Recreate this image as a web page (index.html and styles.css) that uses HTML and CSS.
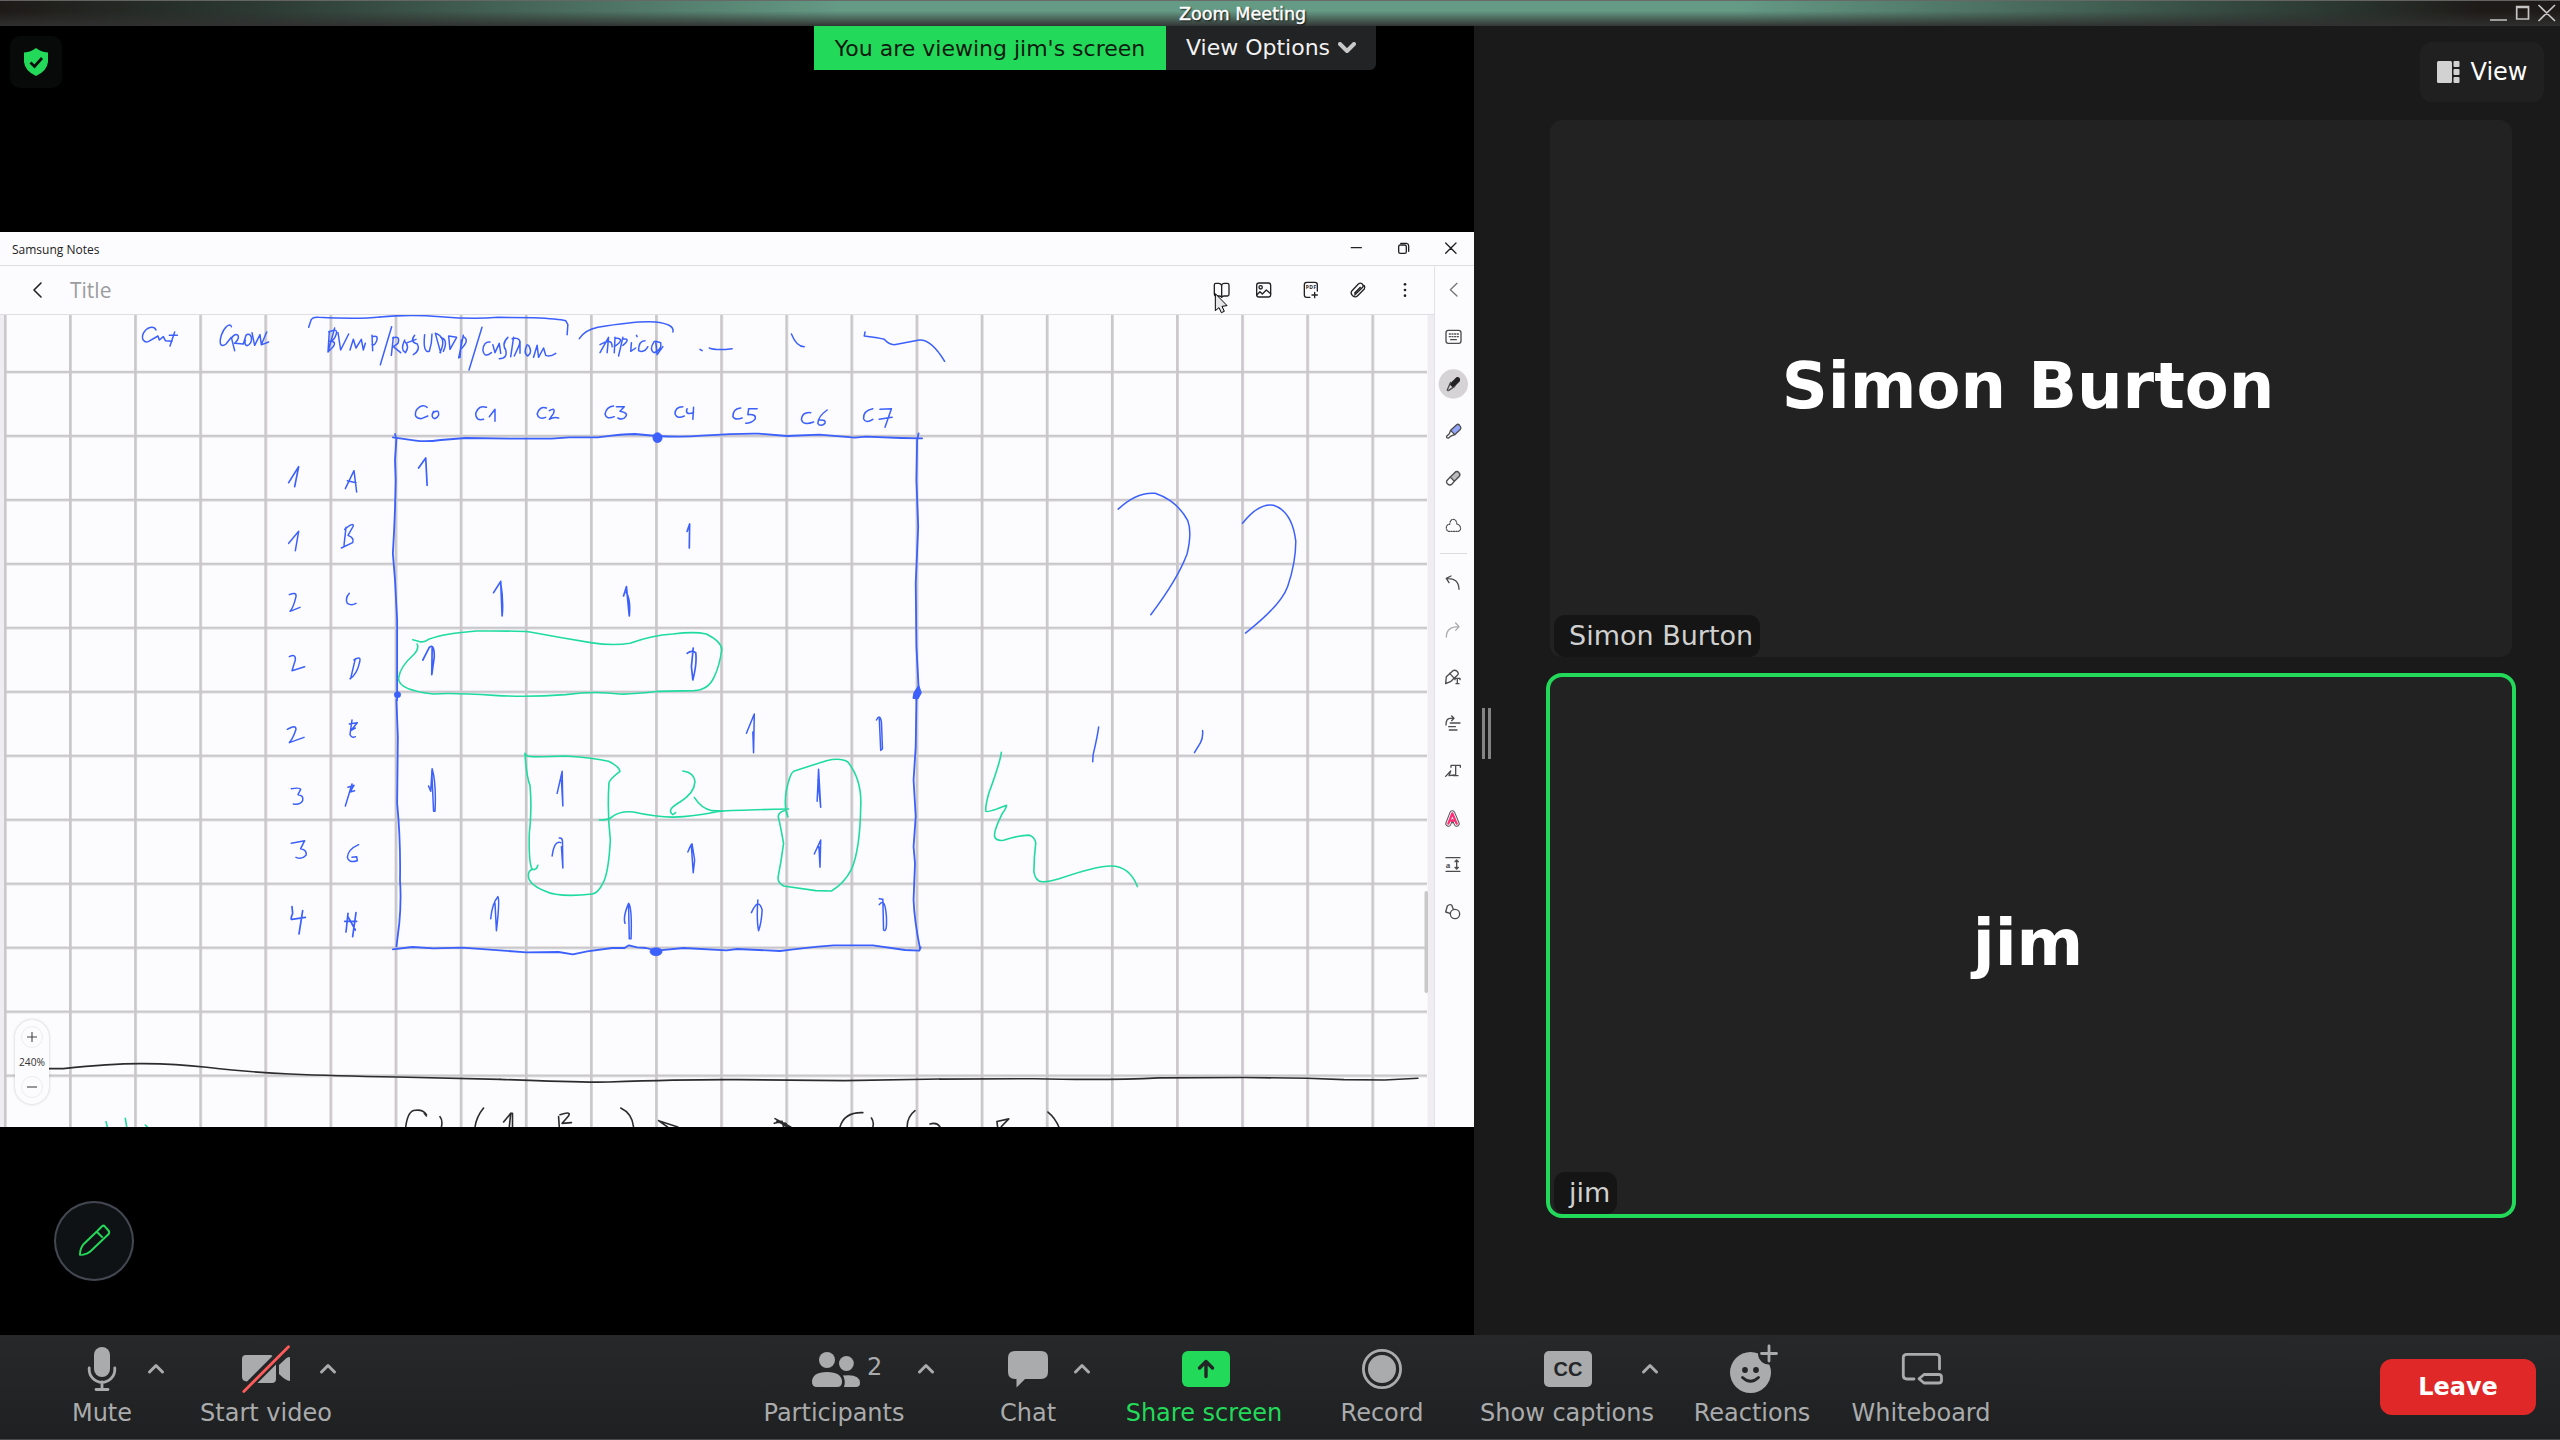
FILE: index.html
```html
<!DOCTYPE html>
<html lang="en">
<head>
<meta charset="utf-8">
<title>Zoom Meeting</title>
<link rel="stylesheet" href="styles.css">
</head>
<body>
<div class="window">
  <header class="titlebar">
    <span class="titlebar-text">Zoom Meeting</span>
    <svg class="titlebar-buttons" width="76" height="26" viewBox="2484 0 76 26">
      <path d="M2490 20H2507M2516.700 6.500H2528.500V19H2516.700ZM2516 7.500H2529M2538.500 5L2555 21M2555 5L2538.500 21"/>
    </svg>
  </header>

  <main class="stage">
    <section class="share-pane">
      <div class="share-top">
        <div class="shield">
          <svg width="26" height="30" viewBox="0 0 26 30"><path fill="#23d959" d="M13 1Q18 5 25 5.500V15Q24 24 13 29Q2 24 1 15V5.500Q8 5 13 1Z"/><path fill="none" stroke="#0a0f0c" stroke-width="2.800" d="M7.500 15.500L11.500 19.500L19 11"/></svg>
        </div>
        <div class="banner">
          <span class="banner-info">You are viewing jim's screen</span>
          <span class="banner-options">View Options
            <svg width="18" height="12" viewBox="0 0 18 12"><path d="M2 2L9 9L16 2"/></svg>
          </span>
        </div>
      </div>

      <div class="notes">
        <div class="notes-title">
          <span>Samsung Notes</span>
          <svg class="ico" width="120" height="33" viewBox="500 21 360 99">
            <path d="M513 68H543M796 54L827 85M827 54L796 85"/>
            <rect x="655" y="60" width="23" height="25" rx="5"/>
            <path d="M661 55H679Q685 56 685 62V79"/>
          </svg>
        </div>
        <div class="notes-body">
          <div class="notes-main">
            <div class="notes-toolbar">
              <svg class="ico back" width="20" height="24" viewBox="0 0 20 24"><path style="stroke-width:1.600" d="M14 5L7 12L14 19"/></svg>
              <span class="notes-heading">Title</span>
              <svg class="ico tools" width="224" height="48" viewBox="90 122 672 144">
                <path d="M125 180Q122 174 116 174H107Q103 174 103 179V207Q103 212 108 212H118Q123 212 125 216Q127 212 132 212H142Q147 212 147 207V179Q147 174 142 174H133Q126 174 125 180V214"/>
                <rect x="230" y="173" width="42" height="42" rx="7"/><circle cx="242" cy="186" r="5"/>
                <path d="M230 209L240 199L247 206L259 194L272 205"/>
                <path d="M373 178Q373 171 380 171H405Q412 171 412 178V197M373 178V209Q373 216 380 216H390M404 201V217M396 209H412"/>
                <text class="pdf" x="377" y="192" textLength="32">PDF</text>
                <path d="M524 209L548 186Q552 180 546 175Q541 171 535 176L516 196Q510 204 518 211Q526 218 533 211L553 191Q556 186 553 181M524 203L541 186"/>
                <g fill="#222" stroke="none"><circle cx="675" cy="177" r="4"/><circle cx="675" cy="194" r="4"/><circle cx="675" cy="211" r="4"/></g>
                <path class="cursor" d="M106 206V256L117 247L124 262L133 258L126 243L140 241Z"/>
              </svg>
            </div>
            <div class="page">
              <svg class="ink" width="1434" height="812" viewBox="0 315 1434 812">
                <defs>
                  <pattern id="cols" x="3.900" y="315" width="65.120" height="900" patternUnits="userSpaceOnUse"><rect width="2.700" height="900" fill="#c9c7ca"/></pattern>
                  <pattern id="rows" x="0" y="370.800" width="1500" height="63.970" patternUnits="userSpaceOnUse"><rect width="1500" height="2.500" fill="#c9c7ca"/></pattern>
                </defs>
                <rect x="4" y="315" width="1423" height="812" fill="url(#cols)"/>
                <rect x="4" y="315" width="1423" height="812" fill="url(#rows)"/>
                <rect x="0" y="315" width="4" height="812" fill="#efedf1"/>
                <rect x="1427.500" y="315" width="6.500" height="812" fill="#efedf1"/>
                <rect x="1424.500" y="891" width="3.500" height="102" rx="1.700" fill="#c8c8c8"/>

                <g class="blue" transform="matrix(.33333 0 0 .33333 0 300)">
                  <path d="M468 90C462 76 440 80 430 100C422 118 434 130 446 124L474 108L478 120L490 110L496 122L516 124M524 96L510 138M508 106L532 106"/>
                  <path d="M694 80C690 66 672 82 664 106C654 140 668 140 678 132L694 112L704 152M694 116C708 90 728 110 704 130L730 132L738 106C746 96 760 108 752 128C742 144 732 136 736 120M756 98L764 136L780 104L784 134L800 96M786 134L806 126"/>
                  <path d="M926 82L934 58Q940 50 956 52Q1080 58 1140 51"/>
                  <path d="M1004 84L984 156M986 96Q1016 82 1008 104Q1002 122 990 124Q1012 124 998 142L984 156L988 94M1014 98L1022 150L1046 102M1050 150L1060 118L1068 144L1084 118L1090 150L1096 130M1116 106L1118 152M1116 110Q1136 104 1130 122Q1124 138 1116 134M1175 80L1141 194"/>
                  <path d="M1180 112L1174 166M1178 114Q1202 106 1194 130L1180 140L1202 158M1214 120Q1200 150 1216 158Q1230 140 1214 124M1244 106Q1228 126 1252 132Q1262 150 1240 164M1222 128L1248 118M1274 104Q1268 160 1288 154Q1296 130 1296 102M1306 100Q1342 112 1320 158M1306 100L1322 158M1322 112Q1346 120 1330 154M1346 108L1350 148L1370 112ZM1390 106L1376 174M1390 110Q1410 120 1384 146M1384 120L1380 172M1446 82L1407 210"/>
                  <path class="thick" d="M866 548L896 500L884 560"/><path d="M1036 566L1062 512L1070 576M1042 542L1068 548"/>
                  <path d="M866 730L896 694L886 752M1038 682L1032 736M1034 688Q1060 666 1060 678L1044 706Q1064 714 1058 728L1024 744"/>
                  <path d="M868 884Q890 874 888 890Q880 924 870 934L900 922M1048 880Q1034 896 1042 910Q1054 918 1068 910"/>
                  <path d="M868 1070Q888 1060 886 1080L876 1112L914 1100M1066 1076L1052 1136M1062 1080Q1086 1064 1078 1090Q1070 1124 1050 1136"/>
                </g>

                <g class="blue" transform="matrix(.35714 0 0 .33333 380 300)">
                  <path d="M0 51Q80 42 170 50Q260 58 330 52L430 53Q500 56 520 62L526 74L524 104"/>
                  <path d="M308 126Q290 124 288 150Q292 176 312 158M316 134L322 158L334 130L338 160M358 112Q340 130 352 150Q358 176 334 176M374 112L366 170M370 116Q400 110 388 140L376 168M392 124V160M412 134Q400 160 414 168Q428 156 416 136M430 172L440 136L444 172L458 144L464 166Q476 172 492 160"/>
                  <path d="M558 116Q574 90 610 82Q720 62 770 66Q826 72 820 96"/>
                  <path d="M616 158L640 112L636 158M616 134Q650 112 650 140M658 112L656 158M658 114Q690 116 656 140M680 112L668 168M680 116Q704 116 680 136M704 128L702 154L716 144M718 106l2 4M742 122Q724 122 724 152Q740 160 750 140M768 124Q752 150 768 158Q790 150 786 128L772 124L776 164L792 140"/>
                  <path d="M896 148l6 4M922 144Q940 152 986 146M1152 102Q1166 140 1188 140M1358 96L1356 108Q1400 114 1412 118Q1424 134 1440 134L1510 120Q1544 118 1581 184"/>
                  <path d="M132 322Q118 310 102 330Q92 356 116 356L134 348M150 334Q140 352 154 356Q170 346 162 334Q150 332 146 344"/>
                  <path d="M298 322Q276 314 268 340Q268 364 290 358M306 350L322 328L322 364"/>
                  <path d="M466 324Q446 318 440 342Q444 360 464 352M474 332Q492 320 486 340L474 358Q486 350 500 354"/>
                  <path d="M654 318Q634 320 630 342Q634 360 656 350M662 320L684 320L672 334Q696 338 688 350Q680 362 666 354"/>
                  <path d="M848 320Q826 320 826 342Q832 358 852 348M860 326Q852 346 878 338M878 322L876 358"/>
                  <path d="M1010 324Q988 326 988 350Q994 362 1014 354M1032 326L1056 326M1032 328L1030 344Q1056 342 1050 358Q1040 370 1024 370"/>
                  <path d="M1206 338Q1182 336 1180 358Q1184 378 1214 366M1252 330Q1226 350 1226 370Q1232 382 1246 370Q1250 358 1230 360"/>
                  <path d="M1380 326Q1352 332 1354 356Q1360 372 1380 358M1400 328L1432 326L1414 382M1398 358L1434 352"/>
                  <path class="edge" d="M36 412L100 422Q130 426 170 420L240 414L380 416L480 416L530 412L610 412Q680 402 714 402L774 408Q850 412 900 407Q1000 400 1060 401L1140 408L1230 404L1330 413L1360 410L1460 414L1518 415"/>
                  <path class="edge" d="M42 402L46 416L42 480L44 540Q42 660 36 760L42 840L48 960L48 1200M1508 400L1504 420L1502 540L1507 680L1500 850L1502 1040L1508 1160L1502 1200"/>
                  <ellipse class="blot" cx="777" cy="413" rx="13" ry="15"/><ellipse class="blot" cx="49" cy="1184" rx="9" ry="9"/><path class="blot" d="M1508 1160L1514 1178L1506 1194L1494 1194L1496 1180Z"/>
                  <path class="thick" d="M108 504L128 474L132 556M860 694L867 672L866 744M318 878L338 844L342 948Q346 900 338 850M682 888L690 860L698 948Q702 900 690 878"/>
                  <path class="thick" d="M120 1080L138 1042Q152 1030 152 1070L145 1124L146 1044M860 1060Q872 1050 884 1058Q888 1090 876 1140L872 1100L877 1044"/>
                </g>
                <path class="green" transform="matrix(.35714 0 0 .33333 380 300)" d="M92 1019L112 1025Q124 1028 136 1018Q180 1000 270 993Q380 992 420 996Q500 1012 590 1028Q650 1038 700 1030Q760 1006 820 1002Q880 994 914 1002Q958 1026 957 1050Q950 1100 936 1130Q920 1170 880 1172L780 1174Q700 1184 670 1182Q600 1172 520 1184Q410 1192 320 1186Q200 1178 150 1182Q50 1170 52 1134Q56 1100 96 1062Q110 1046 104 1032"/>

                <g class="blue" transform="matrix(.33333 0 0 .33333 0 700)">
                  <path d="M862 88Q888 72 888 88Q880 114 868 128L912 112M1056 60L1050 104Q1056 116 1066 110M1048 72L1072 68L1052 92L1066 84"/>
                  <path d="M874 266Q900 262 902 268L894 284Q912 286 908 302Q900 316 880 312M1056 252L1036 318M1044 262L1062 256L1050 276L1064 272"/>
                  <path d="M874 430L914 422L902 446Q922 450 918 466Q906 480 888 472M1076 434Q1044 448 1042 472Q1046 490 1072 482L1070 470L1056 472"/>
                  <path class="thick" d="M876 620L878 640Q870 660 876 658L916 652M908 632L897 702M1044 640L1038 696M1034 664L1070 664M1068 638L1058 710M1044 650L1066 690"/>
                </g>
                <g class="blue" transform="matrix(.35714 0 0 .33333 380 700)">
                  <path class="edge" d="M46 0L50 110L48 310Q58 420 56 540Q60 600 54 670L46 740M1502 0L1500 140L1494 240L1500 350L1494 440L1498 490L1494 600Q1496 660 1512 745"/>
                  <path class="edge" d="M36 748L90 741L150 745L230 743L410 757L500 756L540 763L580 754L650 744L685 744L697 736L720 742L745 744L774 752L850 744L970 751L1000 747L1120 753Q1180 744 1270 736L1380 736L1470 750L1510 752L1514 742"/>
                  <ellipse class="blot" cx="773" cy="755" rx="17" ry="12"/>
                  <path d="M1026 100L1048 42L1046 158L1044 96M1390 60Q1400 40 1404 66L1407 146L1402 151L1398 56M136 258L142 274L146 206Q158 250 154 334L150 334L145 214M496 280L510 214L512 318L508 240M1224 304L1228 208L1234 322L1226 240"/>
                  <path d="M482 468Q488 420 506 428M502 414Q512 412 511 430L512 504L508 440M862 456Q874 424 874 434L881 480L877 518L872 440M1216 462L1234 420L1232 502L1229 440"/>
                  <path d="M310 656Q314 610 330 590Q336 600 326 692L322 610M686 670Q680 650 696 610Q706 620 703 716L698 716L696 616"/>
                  <path d="M1040 638Q1060 590 1070 630Q1068 670 1060 692Q1054 660 1058 600M1398 596L1408 598L1410 690Q1420 700 1418 650Q1414 590 1398 614"/>
                </g>
                <g class="green" transform="matrix(.35714 0 0 .33333 380 700)">
                  <path d="M406 160L412 168Q420 172 520 168Q600 174 640 184Q670 200 672 214Q640 240 641 250Q636 340 645 420Q640 520 624 550Q610 580 594 582Q500 594 460 572Q410 550 416 520Q420 508 428 508Q438 512 442 496M406 160Q410 230 420 256Q426 330 418 400Q416 490 426 508"/>
                  <path d="M614 360Q640 360 648 352Q670 332 710 336Q790 356 850 350Q910 344 950 334Q1000 330 1144 327"/>
                  <path d="M848 213Q880 218 882 245Q880 280 840 306Q800 330 820 344L828 338M880 292Q900 326 930 332L960 333"/>
                  <path d="M1142 350Q1130 320 1138 270Q1148 220 1158 214L1250 182Q1290 172 1310 186Q1350 240 1346 320Q1344 450 1320 508Q1300 550 1264 573L1220 572L1130 558Q1112 546 1115 530Q1124 480 1130 430Q1120 370 1115 350Q1116 336 1132 332"/>
                </g>
                <path class="green" transform="matrix(.33333 0 0 .33333 0 700)" d="M318 1265L322 1281M376 1255L380 1281M436 1275l6 6"/>

                <g class="blue thin" transform="matrix(.3699 0 0 .4273 900 460)">
                  <path d="M590 115Q640 74 690 78Q750 96 778 142Q790 170 776 220Q750 280 678 362M926 148Q970 100 1010 106Q1060 120 1070 190Q1070 240 1048 296Q1030 340 934 405M537 625Q534 646 522 690L521 706M818 633Q820 650 812 662L796 685"/>
                </g>
                <path class="green" transform="matrix(.3699 0 0 .4273 900 460)" d="M274 684Q270 710 240 780Q230 812 232 822Q236 826 288 808Q288 814 276 828Q252 870 256 882Q260 892 280 890Q320 878 350 878Q364 882 367 896Q362 930 362 964Q366 986 384 987Q400 988 430 980Q530 950 570 950Q620 950 642 998"/>

                <path class="black" transform="matrix(.33333 0 0 .33333 0 700)" d="M145 1106L190 1106Q340 1090 430 1091Q530 1092 620 1102Q760 1118 870 1122Q1000 1128 1190 1131L1500 1138"/>
                <path class="black" transform="matrix(.35714 0 0 .33333 380 700)" d="M336 1138Q560 1148 640 1146Q860 1138 1000 1139L1300 1142L1568 1137M72 1281Q78 1230 100 1231Q120 1228 130 1244M124 1240L130 1248M168 1250Q176 1260 172 1281M290 1224Q270 1250 266 1281M346 1266L366 1240L362 1281M366 1240H371V1281M500 1250L502 1281M504 1244Q540 1232 526 1250L510 1270L536 1268M674 1224Q706 1240 710 1281M780 1262L834 1281M780 1262L805 1281M1106 1256L1150 1281M1104 1270L1126 1264L1130 1281M1112 1262L1140 1281M1110 1266L1136 1270L1144 1281M1288 1281Q1300 1236 1352 1238M1376 1254Q1384 1266 1380 1281M1498 1232Q1476 1250 1476 1281M1540 1272Q1560 1266 1568 1281"/>
                <path class="black" transform="matrix(.3699 0 0 .4273 900 460)" d="M108 1449L360 1448Q560 1452 700 1446L930 1445L1100 1447L1200 1450L1310 1451L1400 1447M264 1562L262 1548L294 1542L274 1560M400 1526Q420 1540 430 1562"/>
              </svg>
              <div class="zoombox">
                <svg width="22" height="22" viewBox="0 0 22 22"><circle cx="11" cy="11" r="10.500"/><path d="M6 11H16M11 6V16"/></svg>
                <span>240%</span>
                <svg width="22" height="22" viewBox="0 0 22 22"><circle cx="11" cy="11" r="10.500"/><path d="M6 11H16"/></svg>
              </div>
            </div>
          </div>

          <aside class="rail">
            <svg viewBox="765 123 120 141"><path stroke="#777" d="M831 175L811 194L831 213"/></svg>
            <svg viewBox="765 265 120 141"><rect x="798" y="317" width="45" height="39" rx="7"/><path stroke-dasharray="3 5" d="M808 328H836M808 336H836"/><path d="M812 345H829"/></svg>
            <svg viewBox="765 405 120 141"><circle cx="820" cy="477" r="44" fill="#d5d3d6" stroke="none"/><path fill="#222" stroke="none" d="M830 456Q842 455 840 468L820 489L808 478Z"/><path d="M812 472L802 494Q802 498 806 496L824 484"/></svg>
            <svg viewBox="765 546 120 141"><path fill="#93a4fb" d="M812 616L830 599Q834 596 838 600L842 606Q844 610 840 614L824 629Z"/><path d="M812 616L808 626L800 634Q798 640 806 639L813 633L824 629"/></svg>
            <svg viewBox="765 686 120 141"><path fill="#bbb" d="M811 755L824 742Q831 735 837 742Q843 748 836 755L823 768Z"/><path d="M811 755L803 763Q796 770 803 776Q810 782 816 776L823 768"/></svg>
            <svg viewBox="765 828 120 141"><path stroke-dasharray="4 3.500" stroke-width="3.500" d="M805 919H835Q844 916 841 906Q838 898 831 898Q829 883 820 883Q811 883 809 898Q800 898 799 908Q799 916 805 919"/></svg>
            <hr>
            <svg viewBox="105 59 120 141"><path d="M153 107L139 114L147 127M139 115Q176 112 177 147"/></svg>
            <svg viewBox="105 200 120 141"><path stroke="#aaa" d="M167 248L177 259L167 270M177 259Q139 259 139 290"/></svg>
            <svg viewBox="105 341 120 141"><path d="M137 430L139 409L159 391Q165 388 171 393Q178 400 172 405L153 423L137 430M149 399L163 414M165 418V414H180V418M172 414V430M168 430H177"/></svg>
            <svg viewBox="105 482 120 141"><path d="M138 554Q138 534 150 534H161M155 527L162 534L155 541M151 548H180M146 559H166M148 569H171"/></svg>
            <svg viewBox="105 623 120 141"><path d="M137 708L152 692L147 706L163 704M153 681V675H181V681M167 675V706M160 706H174"/></svg>
            <svg viewBox="105 764 120 141"><path stroke="#555" stroke-width="18" stroke-linejoin="round" d="M145 850L157 819L170 850M149 840H165"/><path stroke="#fff" stroke-width="12" stroke-linejoin="round" d="M145 850L157 819L170 850"/><path stroke="#ff2d76" stroke-width="7" stroke-linejoin="round" d="M145 850L157 819L170 850M149 841H165"/></svg>
            <svg viewBox="105 905 120 141"><path d="M138 952H180M138 993H180M170 959V986M165 964L170 959L175 964M165 981L170 986L175 981"/><text class="rail-a" x="137" y="982">a</text></svg>
            <svg viewBox="105 1046 120 141"><circle cx="165" cy="1121" r="14"/><path d="M150 1119L137 1115L142 1097Q148 1091 155 1094L160 1107"/></svg>
          </aside>
        </div>
      </div>

      <button class="annotate" aria-label="Annotate">
        <svg width="80" height="80" viewBox="162 63 240 240"><path d="M307 138L292 153L252 191Q240 204 240 224Q242 227 262 220L270 215L326 162Q330 156 324 150L315 140Q311 135 307 138M291 156L308 173"/></svg>
      </button>
    </section>

    <section class="people-pane">
      <div class="people-top">
        <button class="view-btn">
          <svg width="23" height="22" viewBox="0 0 23 22"><rect width="15" height="22" rx="1.500"/><rect x="16.500" width="6" height="6" rx="1"/><rect x="16.500" y="8" width="6" height="6" rx="1"/><rect x="16.500" y="16" width="6" height="6" rx="1"/></svg>
          View
        </button>
      </div>
      <div class="people-body">
        <div class="grip"></div>
        <div class="tiles">
          <div class="tile"><span class="big-name">Simon Burton</span><span class="name-tag">Simon Burton</span></div>
          <div class="tile active"><span class="big-name">jim</span><span class="name-tag">jim</span></div>
        </div>
      </div>
    </section>
  </main>

  <footer class="controls">
    <div class="ctl mute">
      <svg width="128" height="54" viewBox="38 1343 128 54"><rect x="94" y="1347" width="16" height="30" rx="8"/><path class="line" d="M89.200 1368V1369.500A12.800 12.800 0 0 0 114.800 1369.500V1368M102 1382V1389M96 1389.500H108"/><path class="chev" d="M149.500 1372L156 1365.500L162.500 1372"/></svg>
      <span>Mute</span>
    </div>
    <div class="ctl video">
      <svg width="144" height="54" viewBox="194 1343 144 54"><path d="M246 1355H270Q272 1355 272.500 1356L247 1381.500Q242 1381 242 1377V1359Q242 1355 246 1355ZM276 1364.500V1379Q276 1383 272 1383H257.500ZM279 1365L286 1358.500Q290 1356 290 1358V1381Q286 1381 279 1374Z"/><path stroke="#ff5b5b" stroke-width="2.800" stroke-linecap="round" d="M243.800 1391.500L288.500 1346.800"/><path class="chev" d="M321.500 1372L328 1365.500L334.500 1372"/></svg>
      <span>Start video</span>
    </div>
    <div class="ctl participants">
      <svg width="200" height="54" viewBox="734 1343 200 54"><circle cx="827" cy="1360" r="8"/><circle cx="846.400" cy="1363.500" r="7.400"/><path d="M812 1382Q812 1372 827 1372Q842 1372 842 1382Q842 1387 837 1387H817Q812 1387 812 1382ZM843 1375.500Q860 1373.500 860 1383Q860 1387 856 1387H844Q846 1381 843 1375.500Z"/><text x="867" y="1375">2</text><path class="chev" d="M919.500 1372L926 1365.500L932.500 1372"/></svg>
      <span>Participants</span>
    </div>
    <div class="ctl chat">
      <svg width="126" height="54" viewBox="965 1343 126 54"><path d="M1015 1351H1041Q1048 1351 1048 1358V1372Q1048 1379 1041 1379H1025L1016.500 1387.500V1379H1015Q1008 1379 1008 1372V1358Q1008 1351 1015 1351Z"/><path class="chev" d="M1075.500 1372L1082 1365.500L1088.500 1372"/></svg>
      <span>Chat</span>
    </div>
    <div class="ctl share">
      <svg width="160" height="54" viewBox="1124 1343 160 54"><rect x="1182" y="1351" width="48" height="36" rx="6"/><path fill="none" stroke="#222425" stroke-width="3.400" stroke-linecap="round" stroke-linejoin="round" d="M1206 1376.500V1362M1199.500 1368L1206 1361.500L1212.500 1368"/></svg>
      <span>Share screen</span>
    </div>
    <div class="ctl record">
      <svg width="100" height="54" viewBox="1332 1343 100 54"><circle cx="1382" cy="1369" r="14"/><circle class="line" cx="1382" cy="1369" r="18.600"/></svg>
      <span>Record</span>
    </div>
    <div class="ctl captions">
      <svg width="184" height="54" viewBox="1475 1343 184 54"><rect x="1544" y="1351" width="48" height="36" rx="5"/><text class="cc" x="1553.500" y="1376" textLength="29">CC</text><path class="chev" d="M1643.500 1372L1650 1365.500L1656.500 1372"/></svg>
      <span>Show captions</span>
    </div>
    <div class="ctl reactions">
      <svg width="120" height="54" viewBox="1692 1343 120 54"><circle cx="1750.500" cy="1372.500" r="20.500"/><circle cx="1769" cy="1353.500" r="11" fill="#252729"/><path class="line" stroke-linecap="butt" d="M1769 1346V1361M1761.500 1353.500H1776.500"/><g fill="#232527"><circle cx="1745" cy="1370" r="2.900"/><circle cx="1756" cy="1370" r="2.900"/></g><path fill="none" stroke="#232527" stroke-width="2.800" stroke-linecap="round" d="M1742.500 1377.500Q1750.500 1385 1758.500 1377.500"/></svg>
      <span>Reactions</span>
    </div>
    <div class="ctl whiteboard">
      <svg width="140" height="54" viewBox="1851 1343 140 54"><path class="line" d="M1939.500 1369V1357.500Q1939.500 1354.300 1936 1354.300H1907Q1903.300 1354.300 1903.300 1357.500V1375.500Q1903.300 1379 1907 1379H1914M1924 1374.500H1938.500Q1941.500 1374.500 1941.500 1377V1380.500Q1941.500 1383 1938.500 1383H1924L1919 1378.700Z"/></svg>
      <span>Whiteboard</span>
    </div>
    <button class="leave">Leave</button>
  </footer>
</div>
</body>
</html>
```
FILE: styles.css
```css
* { box-sizing: border-box; }
body { margin: 0; background: #000; font-family: "DejaVu Sans", sans-serif; }
button { font: inherit; border: 0; margin: 0; padding: 0; color: inherit; }
svg { display: block; }
.window { width: 2560px; height: 1440px; display: flex; flex-direction: column; overflow: hidden; }

.titlebar {
  height: 26px; flex: none; display: flex; align-items: center; justify-content: flex-end; padding-left: 1179px;
  border-top: 1px solid rgba(255, 255, 255, .25);
  background:
    linear-gradient(to bottom, rgba(48, 48, 48, 0) 0 40%, rgba(48, 48, 48, .95) 100%),
    linear-gradient(to right, #1e1a17 0, #2c3a33 260px, #659a85 840px, #659a85 1740px, #2c3a33 2320px, #1e1a17 2480px);
}
.titlebar-text { margin-right: auto; color: #fff; font-size: 17.600px; line-height: 24px; -webkit-text-stroke: .4px #fff; text-shadow: 1px 1px 2px #000; }
.titlebar-buttons { fill: none; stroke: #c4c4c4; stroke-width: 1.700; margin-top: -1px; }

.stage { flex: 1; display: flex; min-height: 0; }
.share-pane { width: 1474px; background: #000; display: flex; flex-direction: column; }
.share-top { height: 206px; display: flex; align-items: flex-start; padding-left: 10px; }
.shield { width: 52px; height: 52px; margin-top: 10px; border-radius: 10px; background: #070a09; display: grid; place-items: center; }
.banner { margin-left: 752px; display: flex; height: 44px; line-height: 46px; font-size: 22px; }
.banner-info { width: 352px; background: #23d959; color: #0d1a11; text-align: center; font-size: 22px; }
.banner-options { width: 210px; background: #222325; color: #f2f2f2; border-bottom-right-radius: 6px; padding-left: 20px; display: flex; align-items: center; gap: 8px; white-space: nowrap; }
.banner-options svg { fill: none; stroke: #c8c8c8; stroke-width: 4; stroke-linecap: round; stroke-linejoin: round; }

.notes { height: 895px; background: #fcfcfe; display: flex; flex-direction: column; font-family: "Open Sans", sans-serif; color: #222; }
.notes-title { height: 34px; border-bottom: 1px solid #dfdfe2; display: flex; justify-content: space-between; padding: 0 7px 0 12px; font-size: 12px; line-height: 35px; }
.ico { fill: none; stroke: #222; stroke-width: 4; stroke-linecap: round; stroke-linejoin: round; }
.notes-body { flex: 1; display: flex; min-height: 0; }
.notes-main { width: 1434px; display: flex; flex-direction: column; }
.notes-toolbar { height: 49px; border-bottom: 1px solid #dfdfe2; display: flex; align-items: center; }
.back { margin-left: 27px; }
.notes-heading { margin-left: 23px; margin-right: auto; font-size: 21px; color: #9c9c9e; }
.pdf { font: bold 15px "Open Sans", sans-serif; fill: #222; stroke: none; }
.cursor { fill: #e6e6e8; stroke: #000; stroke-width: 3; stroke-linejoin: miter; }
.page { position: relative; flex: 1; }
.ink { fill: none; }
.ink path { vector-effect: non-scaling-stroke; stroke-linecap: round; stroke-linejoin: round; }
.blue { stroke: #3c60fb; stroke-width: 1.500px; }
.blue .thick { stroke-width: 1.700px; }
.blue .edge { stroke-width: 1.800px; }
.blot { fill: #3c60fb; stroke-width: 2px; }
.green { stroke: #1fdb9f; stroke-width: 1.600px; }
.black { stroke: #2c2c2e; stroke-width: 1.600px; }
.zoombox { position: absolute; left: 15px; top: 705px; width: 34px; height: 84px; border-radius: 17px; background: #fcfcfe; box-shadow: 0 0 3px rgba(0, 0, 0, .22); display: flex; flex-direction: column; justify-content: space-between; align-items: center; padding: 6px 0; font-size: 10.200px; color: #333; line-height: 21px; }
.zoombox circle { fill: none; stroke: #ececef; stroke-width: 1; }
.zoombox path { stroke: #444; stroke-width: 1.100; }

.rail { width: 40px; border-left: 1px solid #e2e2e5; }
.rail svg { width: 40px; height: 47px; fill: none; stroke: #4c4c4e; stroke-width: 4; stroke-linecap: round; stroke-linejoin: round; }
.rail hr { margin: 5px 7px 6px 5px; border: 0; height: 1px; background: #dcdcdf; }
.rail-a { font: bold 27px "Liberation Serif", serif; fill: #4c4c4e; stroke: none; }

.annotate { width: 80px; height: 80px; margin: 74px 0 0 54px; border-radius: 50%; background: #0e1215; box-shadow: inset 0 0 0 2px #424750; }
.annotate svg { fill: none; stroke: #23d959; stroke-width: 6; stroke-linejoin: round; }

.people-pane { flex: 1; background: #1a1a1a; display: flex; flex-direction: column; }
.people-top { height: 94px; padding: 16px 16px 0; display: flex; justify-content: flex-end; align-items: flex-start; }
.view-btn { width: 124px; height: 60px; border-radius: 12px; background: #202020; color: #fff; font-size: 24px; display: flex; align-items: center; justify-content: center; gap: 11px; }
.view-btn svg { fill: #d2d2d2; }
.people-body { display: flex; flex: 1; }
.grip { width: 9px; height: 51px; margin: 588px 59px 0 8px; border: solid #848484; border-width: 0 3px; }
.tiles { width: 962px; display: flex; flex-direction: column; gap: 20px; }
.tile { position: relative; height: 537px; border-radius: 12px; background: #222; display: grid; place-items: center; color: #fff; }
.tile.active { box-shadow: 0 0 0 4px #23d959; }
.big-name { font-size: 64px; font-weight: bold; line-height: 64px; margin: -5px 6px 0 0; }
.name-tag { position: absolute; left: 4px; bottom: 0; height: 42px; line-height: 41px; padding: 0 7px 0 15px; border-radius: 11px; background: #151515; color: #d0d0d0; font-size: 27px; }

.controls { height: 105px; flex: none; display: flex; background: linear-gradient(#27282a, #1e2021); border-bottom: 1px solid #4a4a4a; color: #aaabac; font-size: 24px; }
.ctl { flex: none; display: flex; flex-direction: column; align-items: center; padding-top: 8px; white-space: nowrap; line-height: 32px; }
.ctl svg { fill: #aaabac; }
.ctl text { font-size: 24px; }
.ctl .cc { font: bold 20px "Liberation Sans", sans-serif; fill: #242628; }
.ctl .line { fill: none; stroke: #aaabac; stroke-width: 2.800; stroke-linecap: round; stroke-linejoin: round; }
.ctl .chev { fill: none; stroke: #aaabac; stroke-width: 3; stroke-linecap: round; stroke-linejoin: round; }
.mute { margin-left: 38px; }
.video { margin-left: 28px; }
.participants { margin-left: 396px; }
.chat { margin-left: 31px; }
.share { margin-left: 33px; width: 160px; color: #23d959; }
.share svg { fill: #23d959; }
.record { margin-left: 48px; }
.captions { margin-left: 43px; }
.reactions { margin-left: 33px; }
.whiteboard { margin-left: 39px; }
.leave { margin: 24px 24px 0 auto; width: 156px; height: 56px; border-radius: 12px; background: #e02828; color: #fff; font-weight: bold; }
```
